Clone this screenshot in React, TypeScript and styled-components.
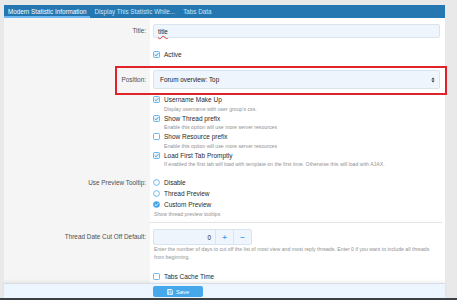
import React from "react";
import styled, { createGlobalStyle } from "styled-components";

const GlobalStyle = createGlobalStyle`
  html, body {
    margin: 0;
    padding: 0;
    background: #e9e9e9;
  }
  body {
    font-family: "Liberation Sans", Arial, sans-serif;
  }
`;

const Page = styled.div`
  width: 457px;
  height: 300px;
  overflow: hidden;
  display: flex;
  flex-direction: column;
  padding-top: 5px;
  box-sizing: border-box;
`;

const Panel = styled.div`
  flex: 1;
  min-height: 0;
  margin: 0 12px 0 4px;
  display: flex;
  flex-direction: column;
  background: #ffffff;
`;

const Tabs = styled.div`
  height: 13px;
  flex-shrink: 0;
  display: flex;
  background: #2577b1;
`;

const Tab = styled.div<{ $active?: boolean }>`
  display: flex;
  align-items: center;
  padding: 0 4px;
  font-size: 6.3px;
  white-space: nowrap;
  color: ${(p) => (p.$active ? "#ffffff" : "#cfe2f3")};
  box-sizing: border-box;
  border-bottom: 2px solid ${(p) => (p.$active ? "#6fb8ef" : "transparent")};
  padding-top: 1px;
`;

const Body = styled.div`
  flex: 1;
  min-height: 0;
  display: flex;
  flex-direction: column;
  background: linear-gradient(to right, #f5f5f5 146px, #ffffff 146px);
`;

const Row = styled.div<{ $pt: number; $pb?: number }>`
  position: relative;
  display: grid;
  grid-template-columns: 146px 1fr;
  & > * {
    padding-top: ${(p) => p.$pt}px;
    padding-bottom: ${(p) => p.$pb ?? 0}px;
  }
`;

const Label = styled.div<{ $lh?: number }>`
  text-align: right;
  padding-right: 4px;
  font-size: 6.4px;
  color: #4f4f4f;
  line-height: ${(p) => p.$lh ?? 10}px;
  white-space: nowrap;
`;

const Field = styled.div<{ $sep?: boolean }>`
  padding-left: 3px;
  padding-right: 5px;
  min-width: 0;
  ${(p) =>
    p.$sep &&
    `
    border-top: 1px solid #e4e4e4;
    margin-right: 3px;
    padding-right: 2px;
  `}
`;

const TextInput = styled.div`
  height: 14px;
  box-sizing: border-box;
  border: 1px solid #d9e4ef;
  border-radius: 2px;
  background: #eef5fd;
  font-size: 6.3px;
  color: #1a1a1a;
  padding: 0 4px;
  display: flex;
  align-items: center;
  .spell {
    text-decoration: underline wavy #e04040;
    text-decoration-thickness: 0.5px;
  }
`;

const Select = styled.div`
  height: 19px;
  box-sizing: border-box;
  border: 1px solid #d9e4ef;
  border-radius: 2px;
  background: #eef5fd;
  font-size: 6.4px;
  color: #1a1a1a;
  padding: 0 4px 0 6px;
  display: flex;
  align-items: center;
  justify-content: space-between;
`;

const Highlight = styled.div`
  position: absolute;
  top: 7px;
  left: 111px;
  width: 332px;
  height: 29px;
  box-sizing: border-box;
  border: 2px solid #e0232b;
  padding: 0 !important;
  pointer-events: none;
`;

const Choice = styled.div<{ $h?: number }>`
  display: flex;
  align-items: center;
  gap: 4px;
  height: ${(p) => p.$h ?? 10}px;
  font-size: 6.5px;
  color: #2a2a2a;
  white-space: nowrap;
`;

const Hint = styled.div<{ $indent?: boolean; $lh?: number }>`
  font-size: 5.2px;
  line-height: ${(p) => p.$lh ?? 9}px;
  color: #929292;
  padding-left: ${(p) => (p.$indent ? 11 : 1)}px;
  white-space: nowrap;
`;

const NumberBox = styled.div`
  width: 99px;
  height: 16px;
  box-sizing: border-box;
  display: flex;
  border: 1px solid #d9e4ef;
  border-radius: 2px;
  background: #eef5fd;
`;

const NumberValue = styled.div`
  flex: 1;
  display: flex;
  align-items: center;
  justify-content: flex-end;
  padding-right: 4px;
  font-size: 6.3px;
  color: #1a1a1a;
`;

const StepButton = styled.div`
  width: 17px;
  display: flex;
  align-items: center;
  justify-content: center;
  border-left: 1px solid #d9e4ef;
  color: #47a7eb;
  font-size: 8px;
  font-weight: bold;
`;

const Footer = styled.div`
  height: 15px;
  flex-shrink: 0;
  box-sizing: border-box;
  background: #edf5fe;
  border-top: 1px solid #d6dde4;
  box-shadow: 0 -2px 3px rgba(0, 0, 0, 0.06);
  padding: 2px 0 0 149px;
`;

const SaveButton = styled.div`
  width: 50px;
  height: 11px;
  box-sizing: border-box;
  background: #47a7eb;
  border-radius: 2px;
  color: #ffffff;
  font-size: 5.8px;
  display: flex;
  align-items: center;
  justify-content: center;
  gap: 3px;
`;

const Strip = styled.div`
  height: 2px;
  flex-shrink: 0;
  background: #3b4045;
`;

const CheckIcon = ({ on }: { on?: boolean }) => (
  <svg width="7" height="7" viewBox="0 0 7 7">
    <rect x="0.5" y="0.5" width="6" height="6" rx="1" fill={on ? "#e6f2fc" : "#ffffff"} stroke="#47a7eb" strokeWidth="0.8" />
    {on && <path d="M1.7 3.6 L3 4.9 L5.4 2.1" fill="none" stroke="#47a7eb" strokeWidth="1" />}
  </svg>
);

const RadioIcon = ({ on }: { on?: boolean }) => (
  <svg width="7" height="7" viewBox="0 0 7 7">
    {on ? (
      <>
        <circle cx="3.5" cy="3.5" r="3.3" fill="#47a7eb" />
        <path d="M1.9 3.6 L3.1 4.7 L5.2 2.4" fill="none" stroke="#ffffff" strokeWidth="0.9" />
      </>
    ) : (
      <circle cx="3.5" cy="3.5" r="2.9" fill="#ffffff" stroke="#47a7eb" strokeWidth="0.8" />
    )}
  </svg>
);

const SelectArrows = () => (
  <svg width="4" height="6" viewBox="0 0 4 6">
    <path d="M0.4 2.4 L2 0.6 L3.6 2.4 Z M0.4 3.6 L2 5.4 L3.6 3.6 Z" fill="#333" />
  </svg>
);

const SaveIcon = () => (
  <svg width="6" height="6" viewBox="0 0 6 6">
    <path d="M0.5 0.5 H4.6 L5.5 1.4 V5.5 H0.5 Z" fill="none" stroke="#fff" strokeWidth="0.7" />
    <rect x="1.5" y="0.6" width="2.5" height="1.5" fill="none" stroke="#fff" strokeWidth="0.5" />
    <rect x="1.4" y="3.2" width="3.2" height="1.8" fill="none" stroke="#fff" strokeWidth="0.5" />
  </svg>
);

const options = [
  { label: "Username Make Up", hint: "Display username with user group's css.", on: true },
  { label: "Show Thread prefix", hint: "Enable this option will use more server resources", on: true },
  { label: "Show Resource prefix", hint: "Enable this option will use more server resources", on: false },
  {
    label: "Load First Tab Promptly",
    hint: "If enabled the first tab will load with template on the first time. Otherwise this will load with AJAX.",
    on: true,
  },
];

const tooltips = [
  { label: "Disable", on: false },
  { label: "Thread Preview", on: false },
  { label: "Custom Preview", on: true },
];

const App: React.FC = () => {
  return (
    <>
      <GlobalStyle />
      <Page>
        <Panel>
          <Tabs>
            <Tab $active>Modern Statistic Information</Tab>
            <Tab>Display This Statistic While...</Tab>
            <Tab>Tabs Data</Tab>
          </Tabs>
          <Body>
            <Row $pt={6}>
              <Label $lh={14}>Title:</Label>
              <Field>
                <TextInput>
                  <span className="spell">title</span>
                </TextInput>
              </Field>
            </Row>
            <Row $pt={11}>
              <Label />
              <Field>
                <Choice>
                  <CheckIcon on />
                  Active
                </Choice>
              </Field>
            </Row>
            <Row $pt={11}>
              <Label $lh={19}>Position:</Label>
              <Field>
                <Select>
                  <span>Forum overview: Top</span>
                  <SelectArrows />
                </Select>
              </Field>
              <Highlight />
            </Row>
            <Row $pt={6}>
              <Label />
              <Field>
                {options.map((o) => (
                  <div key={o.label}>
                    <Choice $h={9.5}>
                      <CheckIcon on={o.on} />
                      {o.label}
                    </Choice>
                    <Hint $indent>{o.hint}</Hint>
                  </div>
                ))}
              </Field>
            </Row>
            <Row $pt={8} $pb={3}>
              <Label $lh={11}>Use Preview Tooltip:</Label>
              <Field>
                {tooltips.map((t) => (
                  <Choice key={t.label} $h={11}>
                    <RadioIcon on={t.on} />
                    {t.label}
                  </Choice>
                ))}
                <Hint>Show thread preview tooltips</Hint>
              </Field>
            </Row>
            <Row $pt={6}>
              <Label $lh={17}>Thread Date Cut Off Default:</Label>
              <Field $sep>
                <NumberBox>
                  <NumberValue>0</NumberValue>
                  <StepButton>+</StepButton>
                  <StepButton>−</StepButton>
                </NumberBox>
                <Hint $lh={8}>
                  Enter the number of days to cut off the list of most view and most reply threads. Enter 0 if you want to include all threads
                </Hint>
                <Hint $lh={8}>from beginning.</Hint>
              </Field>
            </Row>
            <Row $pt={10.5}>
              <Label />
              <Field>
                <Choice>
                  <CheckIcon />
                  Tabs Cache Time
                </Choice>
              </Field>
            </Row>
          </Body>
          <Footer>
            <SaveButton>
              <SaveIcon />
              Save
            </SaveButton>
          </Footer>
        </Panel>
        <Strip />
      </Page>
    </>
  );
};

export default App;
